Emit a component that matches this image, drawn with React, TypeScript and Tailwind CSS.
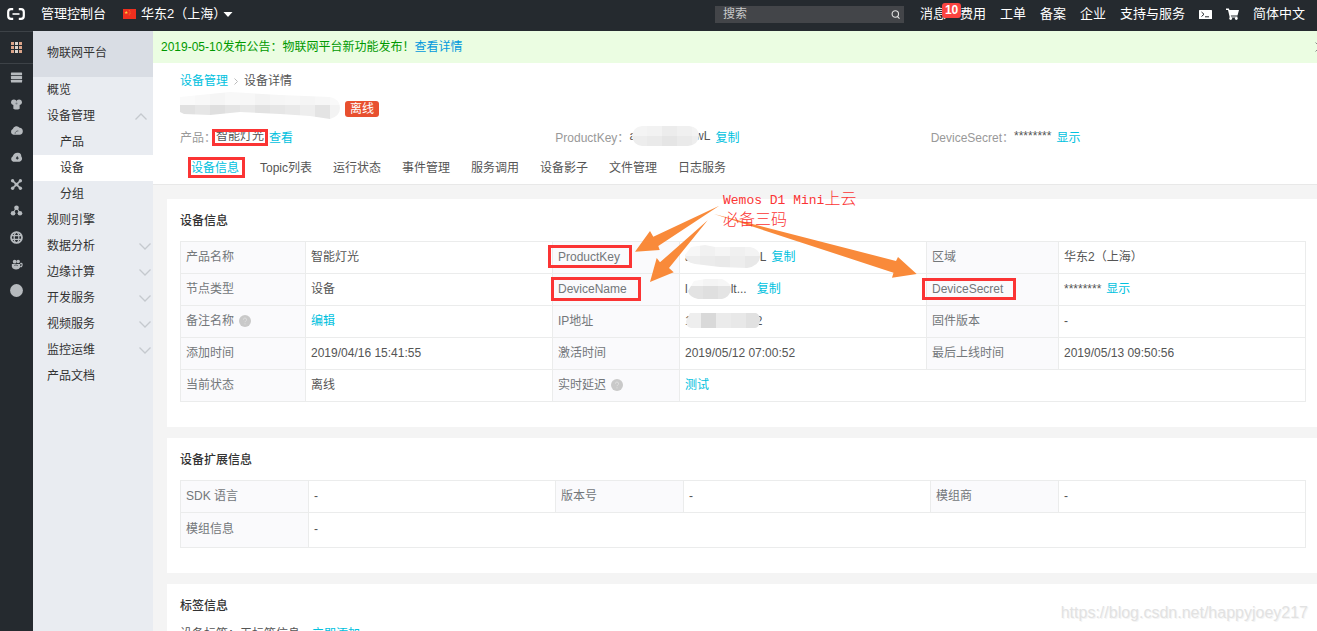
import type { ReactNode } from "react";

function Chevron({ up }: { up?: boolean }) {
  return (
    <svg viewBox="0 0 12 7" className="h-[7px] w-3" fill="none" stroke="#c5c9ce" strokeWidth="1.3" aria-hidden="true">
      {up ? <path d="M0.5 6.5 L6 1 L11.5 6.5" /> : <path d="M0.5 0.5 L6 6 L11.5 0.5" />}
    </svg>
  );
}

function Mosaic({ id, shape, width, height, rows, cell = 15, className = "" }: {
  id: string; shape: string; width: number; height: number; rows: { y: number; h: number; tones: string[] }[]; cell?: number; className?: string;
}) {
  return (
    <svg width={width} height={height} viewBox={`0 0 ${width} ${height}`} className={`relative shrink-0 ${className}`} aria-hidden="true">
      <clipPath id={id}><path d={shape} /></clipPath>
      <g clipPath={`url(#${id})`}>
        {rows.map((r) =>
          r.tones.map((t, i) => <rect key={`${r.y}-${i}`} x={i * cell} y={r.y} width={cell} height={r.h} fill={t} />)
        )}
      </g>
    </svg>
  );
}

const railIcons: { name: string; art: ReactNode }[] = [
  {
    name: "服务器",
    art: (
      <>
        <rect x="1" y="1.5" width="12" height="3.200" rx=".6" />
        <rect x="1" y="5.400" width="12" height="3.200" rx=".6" />
        <rect x="1" y="9.300" width="12" height="3.200" rx=".6" />
      </>
    ),
  },
  {
    name: "数据库",
    art: (
      <>
        <circle cx="4.2" cy="4.6" r="3" />
        <circle cx="9.8" cy="4.6" r="3" />
        <path d="M3.600 4h6.800v7.500q-3.400 1.800-6.800 0z" />
        <circle cx="7" cy="6" r="1.1" fill="#7a8086" />
      </>
    ),
  },
  {
    name: "云服务",
    art: (
      <>
        <path d="M3.8 11.5A3.2 3.2 0 0 1 3 5.4 4.2 4.2 0 0 1 10.4 4a3.8 3.8 0 0 1 .4 7.5z" />
        <path d="M5.500 10.500a3 3 0 0 1 3.500-3" fill="none" stroke="#5b6167" strokeWidth="1" />
      </>
    ),
  },
  {
    name: "云存储",
    art: (
      <>
        <path d="M3.4 11.5A3 3 0 0 1 2.8 6 6 6 0 0 1 8 2q4-.4 4.2 4a3.4 3.4 0 0 1-2 5.500z" />
        <path d="M7.800 5.500l1.700 2.200-1.700 1.600-1.600-1.600z" fill="#33393e" />
      </>
    ),
  },
  {
    name: "网络",
    art: (
      <>
        <path d="M3 3l8 8M11 3l-8 8" stroke="#b6babe" strokeWidth="1.8" />
        <circle cx="2.8" cy="3" r="1.800" />
        <circle cx="11.200" cy="3" r="1.800" />
        <circle cx="2.8" cy="11" r="1.800" />
        <circle cx="11.200" cy="11" r="1.800" />
        <circle cx="7" cy="7" r="2" />
      </>
    ),
  },
  {
    name: "负载均衡",
    art: (
      <>
        <path d="M7 4l-4 6M7 4l4 6" stroke="#b6babe" strokeWidth="1.200" />
        <circle cx="7" cy="4" r="2.5" />
        <circle cx="3.300" cy="10" r="2.500" />
        <circle cx="10.700" cy="10" r="2.500" />
      </>
    ),
  },
  {
    name: "域名",
    art: (
      <>
        <circle cx="7" cy="7" r="5.900" fill="none" stroke="#b6babe" strokeWidth="1.900" />
        <ellipse cx="7" cy="7" rx="2.500" ry="5.600" fill="none" stroke="#b6babe" strokeWidth="1.400" />
        <path d="M1.500 5h11M1.500 9h11" stroke="#b6babe" strokeWidth="1.400" />
      </>
    ),
  },
  {
    name: "容器",
    art: (
      <>
        <path d="M2 6.500h9v3.500q-1 2.500-4.500 2.500T2 9.500z" />
        <circle cx="5" cy="4" r="2" />
        <circle cx="8.800" cy="3.700" r="1.900" />
        <path d="M11 6q2.200-.8 2 1.500t-2 1.700" fill="none" stroke="#b6babe" strokeWidth="1.300" />
        <path d="M4.500 8q2-1.200 4 .3" fill="none" stroke="#53595e" strokeWidth="1" />
      </>
    ),
  },
  { name: "更多", art: <circle cx="7" cy="7" r="6.900" /> },
];

const menu: { label: string; kind?: "open" | "closed" | "sub" | "active" }[] = [
  { label: "概览" },
  { label: "设备管理", kind: "open" },
  { label: "产品", kind: "sub" },
  { label: "设备", kind: "active" },
  { label: "分组", kind: "sub" },
  { label: "规则引擎" },
  { label: "数据分析", kind: "closed" },
  { label: "边缘计算", kind: "closed" },
  { label: "开发服务", kind: "closed" },
  { label: "视频服务", kind: "closed" },
  { label: "监控运维", kind: "closed" },
  { label: "产品文档" },
];

const tabs = ["设备信息", "Topic列表", "运行状态", "事件管理", "服务调用", "设备影子", "文件管理", "日志服务"];

function Action({ children }: { children: ReactNode }) {
  return <button type="button" className="text-[#00c1de]">{children}</button>;
}

function Help() {
  return (
    <svg viewBox="0 0 12 12" className="h-3 w-3" role="img" aria-label="帮助">
      <circle cx="6" cy="6" r="6" fill="#c9c9c9" />
      <path d="M4.400 4.700a1.600 1.600 0 1 1 2.300 1.400q-.7.400-.7 1.100M6 8.400v1" fill="none" stroke="#e0e0e0" strokeWidth="1" />
    </svg>
  );
}

function Th({ children }: { children: ReactNode }) {
  return (
    <th scope="row" className="border border-[#ebecec] bg-[#fafafc] px-[5px] pb-[2px] text-left font-normal text-[#73777a]">
      <div className="flex items-center gap-[5px]">{children}</div>
    </th>
  );
}

function Td({ children, span, wide }: { children: ReactNode; span?: number; wide?: boolean }) {
  return (
    <td colSpan={span} className="border border-[#ebecec] px-[5px] pb-[2px] text-[#555]">
      <div className={wide ? "flex items-center gap-[10px]" : "flex items-center gap-[5px]"}>{children}</div>
    </td>
  );
}

function Card({ title, children }: { title: string; children: ReactNode }) {
  return (
    <section className="bg-white pt-3 pr-[11px] pb-[25px] pl-[13px]">
      <h2 className="mb-[10px] font-medium leading-5 text-[#333]">{title}</h2>
      {children}
    </section>
  );
}

function TopBar() {
  return (
    <header className="flex h-[31px] shrink-0 items-center bg-[#252a2f] pr-3 pb-[3px] pl-[7px] text-[13px] leading-5 whitespace-nowrap text-white">
      <svg viewBox="0 0 18 12" className="h-3 w-[18px]" fill="none" stroke="#fff" aria-label="阿里云" role="img">
        <path d="M6.200 1.200H4Q1.200 1.200 1.200 4v4q0 2.800 2.800 2.800h2.200M11.800 1.200H14q2.800 0 2.800 2.800v4q0 2.800-2.800 2.800h-2.200" strokeWidth="2.200" />
        <path d="M5.500 6h7" strokeWidth="1.600" />
      </svg>
      <a href="#console" className="ml-4">管理控制台</a>
      <button type="button" className="ml-[17px] flex items-center">
        <svg viewBox="0 0 13 10" className="mr-[5px] h-[10px] w-[13px]" aria-hidden="true">
          <rect width="13" height="10" fill="#ee2f1e" />
          <path d="M3.200 1.800l.5 1.200h1.300l-1 .8.400 1.300-1.200-.8-1.100.8.400-1.300-1-.8h1.200z" fill="#ffd23c" />
          <path d="M5.800 1.500h.8M6.600 3h.8M6.600 4.500h.8M5.800 5.800h.8" stroke="#f9a23a" strokeWidth=".7" />
        </svg>
        华东2（上海）
        <svg viewBox="0 0 10 5" className="-ml-[3px] h-[5px] w-[10px]" fill="#fff" aria-hidden="true"><path d="M.5 0h9L5 5z" /></svg>
      </button>
      <label className="mr-4 ml-auto flex h-[17px] w-[189px] items-center bg-[#434549] px-2">
        <span className="sr-only">搜索</span>
        <input type="search" placeholder="搜索" className="h-[17px] min-w-0 flex-1 bg-transparent text-xs leading-[17px] outline-none placeholder:text-[#c8c9ca]" />
        <svg viewBox="0 0 9 9" className="-mr-1 h-[9px] w-[9px]" fill="none" stroke="#e4e4e4" strokeWidth="1.100" aria-hidden="true">
          <circle cx="4.300" cy="4" r="3.200" />
          <path d="M6.300 6.300L8.500 8.600" />
        </svg>
      </label>
      <nav className="flex items-center gap-[14px]">
        <a href="#messages" className="relative">
          消息
          <span className="absolute -top-px left-[22px] z-10 h-[15px] rounded-[3px] bg-[#fb4440] px-[3px] text-xs leading-[15px] font-bold">10</span>
        </a>
        <a href="#billing">费用</a>
        <a href="#tickets">工单</a>
        <a href="#icp">备案</a>
        <a href="#enterprise">企业</a>
        <a href="#support">支持与服务</a>
        <a href="#shell" aria-label="云命令行">
          <svg viewBox="0 0 13 9" className="h-[9px] w-[13px]" aria-hidden="true">
            <rect width="13" height="9" rx=".5" fill="#fff" />
            <path d="M2.500 2l2.500 2.300L2.500 6.500M6 6.800h4" fill="none" stroke="#252a2f" strokeWidth="1" />
          </svg>
        </a>
        <a href="#cart" aria-label="购物车">
          <svg viewBox="0 0 13 12" className="h-3 w-[13px]" fill="#fff" aria-hidden="true">
            <path d="M0 .6h2.900l.5 1.400H13l-1.500 5.600H4.800l.2.800h6.400v1.200H3.800L2 1.900H0z" />
            <circle cx="4.700" cy="10.500" r="1.400" />
            <circle cx="10.300" cy="10.500" r="1.400" />
          </svg>
        </a>
        <button type="button">简体中文</button>
      </nav>
    </header>
  );
}

function Rail() {
  return (
    <aside className="w-[33px] shrink-0 bg-[#252a2f]">
      <button type="button" aria-label="全部产品" className="flex h-[33px] w-full items-center justify-center border-y border-[#3d4247]">
        <svg viewBox="0 0 11 11" className="h-[11px] w-[11px]" aria-hidden="true">
          {[0, 4, 8].map((y) => [0, 4, 8].map((x) => (
            <rect key={`${x}-${y}`} x={x} y={y} width="3" height="3" fill={x === 4 ? "#d9d3cc" : "#dba489"} />
          )))}
        </svg>
      </button>
      <div className="flex h-60 flex-col">
        {railIcons.map((icon) => (
          <button type="button" key={icon.name} aria-label={icon.name} className="flex flex-1 items-center justify-center">
            <svg viewBox="0 0 14 14" className="h-[13px] w-[13px]" fill="#b6babe" aria-hidden="true">{icon.art}</svg>
          </button>
        ))}
      </div>
    </aside>
  );
}

function Sidebar() {
  return (
    <nav className="w-[120px] shrink-0 bg-[#e9ecf1] text-[#333]">
      <div className="flex h-[46px] items-center bg-[#d9dde4] pb-[2px] pl-[14px]">物联网平台</div>
      {menu.map(({ label, kind }) => {
        const tone =
          kind === "active" ? "bg-white pr-1 pl-[27px]" :
          kind === "sub" ? "pr-1 pl-[27px]" :
          kind === "open" ? "pr-[6px] pl-[14px]" : "pr-[2px] pl-[14px]";
        return (
          <a key={label} href={`#${label}`} className={`flex h-[26px] items-center justify-between ${tone}`}>
            {label}
            {kind === "open" && <Chevron up />}
            {kind === "closed" && <Chevron />}
          </a>
        );
      })}
    </nav>
  );
}

function DeviceHeader() {
  return (
    <div className="border-b border-[#e8e8e8] bg-white pt-2 pr-[11px] pb-[6px] pl-[27px] leading-5">
      <div className="flex items-center">
        <a href="#devices" className="text-[#00c1de]">设备管理</a>
        <svg viewBox="0 0 4 7" className="mx-[6px] h-[7px] w-1" fill="none" stroke="#bbb" aria-hidden="true"><path d="M.5.500l3 3-3 3" /></svg>
        <span className="text-[#555]">设备详情</span>
      </div>
      <div className="flex h-[30px] items-start gap-[5px] pt-px">
        <Mosaic
          id="mosaic-name"
          width={160}
          height={27}
          shape="M0 5 L30 2 L50 0 L100 3 L150 5 Q160 7 160 16 Q160 24 150 27 L130 24 L100 22 L60 20 L30 23 L4 22 L0 20Z"
          rows={[
            { y: 0, h: 13, tones: ["#fafafa", "#f8f8f8", "#f5f5f5", "#f8f8f8", "#f7f7f7", "#f3f3f3", "#f6f6f6", "#f7f7f7", "#f5f5f5", "#f7f7f7", "#f9f9f9"] },
            { y: 13, h: 14, tones: ["#e1e1e1", "#e6e6e6", "#dfdfdf", "#e4e4e4", "#e8e8e8", "#e2e2e2", "#e6e6e6", "#e9e9e9", "#eeeeee", "#e4e4e4", "#f3f3f3"] },
          ]}
        />
        <span className="mt-[9px] rounded-[3px] bg-[#e8502f] px-[5px] leading-4 text-white">离线</span>
      </div>
      <dl className="mt-[7px] grid h-5 grid-cols-3">
        <div className="flex items-start">
          <dt className="text-[#999]">产品：</dt>
          <dd className="flex gap-[5px] text-[#555]">
            <span className="leading-4">智能灯光</span>
            <Action>查看</Action>
          </dd>
        </div>
        <div className="flex items-start">
          <dt className="text-[#999]">ProductKey：</dt>
          <dd className="flex gap-[5px] text-[#555]">
            <span className="flex h-4 items-center leading-4">
              a
              <Mosaic
                id="mosaic-key"
                width={67}
                height={20}
                className="-mx-1"
                shape="M10 0 H57 Q67 1 67 10 Q66 19 56 20 H10 Q1 19 0 10 Q1 1 10 0Z"
                rows={[
                  { y: 0, h: 10, tones: ["#f4f4f4", "#f2f2f2", "#ececec", "#f0f0f0", "#f3f3f3"] },
                  { y: 10, h: 10, tones: ["#ededed", "#eaeaea", "#e5e5e5", "#eaeaea", "#eeeeee"] },
                ]}
              />
              wL
            </span>
            <Action>复制</Action>
          </dd>
        </div>
        <div className="flex items-start">
          <dt className="text-[#999]">DeviceSecret：</dt>
          <dd className="flex gap-[5px] text-[#555]">
            <span className="leading-4">********</span>
            <Action>显示</Action>
          </dd>
        </div>
      </dl>
      <div role="tablist" className="mt-[10px] ml-[11px] flex gap-[21px] text-[#555]">
        {tabs.map((tab, i) => (
          <button key={tab} type="button" role="tab" aria-selected={i === 0} className={i === 0 ? "text-[#00c1de]" : ""}>{tab}</button>
        ))}
      </div>
    </div>
  );
}

function DeviceInfo() {
  return (
    <table className="w-full table-fixed border-collapse leading-5">
      <colgroup>
        <col className="w-[125px]" /><col /><col className="w-[127px]" /><col /><col className="w-[132px]" /><col />
      </colgroup>
      <tbody>
        <tr className="h-8">
          <Th>产品名称</Th><Td>智能灯光</Td>
          <Th>ProductKey</Th>
          <Td>
            <span className="flex h-5 items-center">
              a
              <Mosaic
                id="mosaic-key-cell"
                width={75}
                height={23}
                className="-ml-[7px]"
                shape="M6 2 L20 0 L30 2 L65 2 Q75 4 75 12 Q74 21 62 23 L35 22 L10 19 Q0 17 0 10Z"
                rows={[
                  { y: 0, h: 11, tones: ["#f7f7f7", "#f1f1f1", "#f5f5f5", "#f0f0f0", "#f3f3f3"] },
                  { y: 11, h: 12, tones: ["#eeeeee", "#ebebeb", "#e9e9e9", "#ededed", "#e8e8e8"] },
                ]}
              />
              L
            </span>
            <Action>复制</Action>
          </Td>
          <Th>区域</Th><Td>华东2（上海）</Td>
        </tr>
        <tr className="h-8">
          <Th>节点类型</Th><Td>设备</Td>
          <Th>DeviceName</Th>
          <Td wide>
            <span className="flex h-5 items-center">
              l
              <Mosaic
                id="mosaic-device"
                width={43}
                height={20}
                shape="M6 2 L18 0 H34 Q43 4 43 10 Q42 18 34 20 H10 Q1 18 0 12Z"
                rows={[
                  { y: 0, h: 7, tones: ["#f8f8f8", "#f4f4f4", "#f6f6f6"] },
                  { y: 7, h: 13, tones: ["#e3e3e3", "#dfdfdf", "#e4e4e4"] },
                ]}
              />
              lt...
            </span>
            <Action>复制</Action>
          </Td>
          <Th>DeviceSecret</Th>
          <Td><span>********</span><Action>显示</Action></Td>
        </tr>
        <tr className="h-8">
          <Th>备注名称<Help /></Th><Td><Action>编辑</Action></Td>
          <Th>IP地址</Th>
          <Td>
            <span className="flex h-5 items-center">
              1
              <Mosaic
                id="mosaic-ip"
                width={74}
                height={15}
                className="-mr-1 -ml-[6px]"
                shape="M4 0 H70 Q74 1 74 8 Q73 15 69 15 H5 Q0 14 0 8Z"
                rows={[{ y: 0, h: 15, tones: ["#eeeeee", "#d9d9d9", "#ebebeb", "#e8e8e8", "#e1e1e1"] }]}
              />
              2
            </span>
          </Td>
          <Th>固件版本</Th><Td>-</Td>
        </tr>
        <tr className="h-8">
          <Th>添加时间</Th><Td>2019/04/16 15:41:55</Td>
          <Th>激活时间</Th><Td>2019/05/12 07:00:52</Td>
          <Th>最后上线时间</Th><Td>2019/05/13 09:50:56</Td>
        </tr>
        <tr className="h-8">
          <Th>当前状态</Th><Td>离线</Td>
          <Th>实时延迟<Help /></Th><Td span={3}><Action>测试</Action></Td>
        </tr>
      </tbody>
    </table>
  );
}

function ExtendedInfo() {
  return (
    <table className="w-full table-fixed border-collapse leading-5">
      <colgroup>
        <col className="w-32" /><col /><col className="w-32" /><col /><col className="w-32" /><col />
      </colgroup>
      <tbody>
        <tr className="h-8">
          <Th>SDK 语言</Th><Td>-</Td><Th>版本号</Th><Td>-</Td><Th>模组商</Th><Td>-</Td>
        </tr>
        <tr className="h-[35px]">
          <Th>模组信息</Th><Td span={5}>-</Td>
        </tr>
      </tbody>
    </table>
  );
}

/* Hand-placed notes that float above the console. */
function Annotations() {
  const box = "absolute border-[3px] border-[#fb3434]";
  return (
    <div className="pointer-events-none absolute inset-0">
      <div className={`${box} top-[129px] left-[212px] h-[17px] w-[56px]`} />
      <div className={`${box} top-[157px] left-[188px] h-[21px] w-[57px]`} />
      <div className={`${box} top-[245px] left-[548px] h-[23px] w-[84px]`} />
      <div className={`${box} top-[277px] left-[551px] h-[24px] w-[90px]`} />
      <div className={`${box} top-[278px] left-[922px] h-[22px] w-[94px]`} />
      <svg width="300" height="90" viewBox="630 200 300 90" className="absolute top-[200px] left-[630px]" fill="#f98a3a" aria-hidden="true">
        <path d="M719.300 205.700L653.300 236.700 650 231 635 251.700 659.700 250 658.300 246Z" />
        <path d="M707.700 220.300L660 262.300 656.700 258 650 282 673.700 272.300 669 268Z" />
        <path d="M714 214L896 261 898 257 916.700 274 892 277.700 893.500 272.700Z" />
      </svg>
      <p className="absolute top-[190px] left-[723px] font-['Liberation_Mono','Noto_Sans_CJK_SC',monospace] text-[16px] leading-5 font-light whitespace-nowrap text-[#fb3434]">
        <span className="text-[13px]">Wemos D1 Mini</span>上云<br />必备三码
      </p>
      <p className="absolute right-[9px] bottom-2 text-[16px] leading-5 text-[#e2e2e2] [text-shadow:1px_1px_0_#f4f4f4]">https://blog.csdn.net/happyjoey217</p>
    </div>
  );
}

export default function App() {
  return (
    <div className="relative flex h-screen flex-col overflow-hidden bg-[#f4f4f4] font-['Liberation_Sans','Noto_Sans_CJK_SC',sans-serif] text-xs">
      <TopBar />
      <div className="flex min-h-0 flex-1">
        <Rail />
        <Sidebar />
        <main className="min-w-0 flex-1 overflow-hidden">
          <div className="flex h-8 items-center justify-between overflow-hidden bg-[#ebfde2] pl-2 text-[#090]">
            <p>2019-05-10发布公告：物联网平台新功能发布！<a href="#notice" className="text-[#0099dd]">查看详情</a></p>
            <button type="button" aria-label="关闭" className="-mr-2">
              <svg viewBox="0 0 10 10" className="h-[10px] w-[10px]" fill="none" stroke="#888" aria-hidden="true"><path d="M.5.500l9 9M9.500.500l-9 9" /></svg>
            </button>
          </div>
          <DeviceHeader />
          <div className="flex flex-col gap-[11px] pt-[14px] pl-[14px]">
            <Card title="设备信息"><DeviceInfo /></Card>
            <Card title="设备扩展信息"><ExtendedInfo /></Card>
            <Card title="标签信息">
              <p className="flex gap-3 leading-4 text-[#555]"><span>设备标签：无标签信息</span><Action>立即添加</Action></p>
            </Card>
          </div>
        </main>
      </div>
      <Annotations />
    </div>
  );
}
